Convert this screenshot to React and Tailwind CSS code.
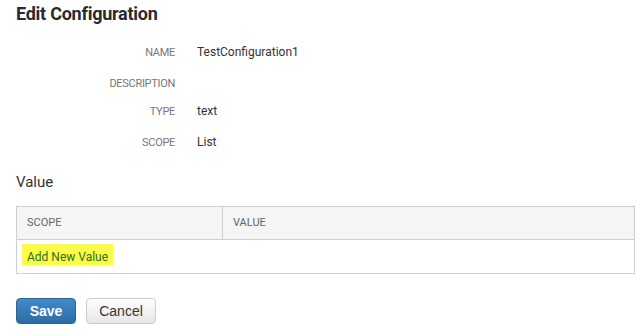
export default function App() {
  const rows = [
    { label: "NAME", value: "TestConfiguration1", h: "h-[31px]" },
    { label: "DESCRIPTION", value: "", h: "h-[28px]" },
    { label: "TYPE", value: "text", h: "h-[31px]" },
    { label: "SCOPE", value: "List", h: "h-[16px]" },
  ];
  return (
    <div className="w-[641px] h-[336px] bg-white px-4 font-['Roboto','Liberation_Sans',sans-serif] text-[#333]">
      <h1 className="pt-[2px] h-[26px] text-[18px] leading-[24px] font-bold tracking-[-0.25px] text-[#2a2a2e]">
        Edit Configuration
      </h1>
      <div className="mt-[18px] flex flex-col">
        {rows.map((r) => (
          <div key={r.label} className={`flex items-start ${r.h}`}>
            <div className="w-[159px] text-right text-[11px] leading-[16px] pt-[1px] tracking-[-0.3px] text-[#777]">
              {r.label}
            </div>
            <div className="ml-[22px] text-[12px] leading-[16px] text-[#333]">{r.value}</div>
          </div>
        ))}
      </div>
      <div className="mt-[22px] text-[15px] leading-[20px] text-[#333]">Value</div>
      <div className="mt-[14px] w-[619px] border border-[#cfcfcf]">
        <div className="flex h-[33px] bg-[#f5f5f5] border-b border-[#cfcfcf]">
          <div className="w-[206px] border-r border-[#cfcfcf] flex items-center pl-[10px] text-[11px] text-[#666]">
            SCOPE
          </div>
          <div className="flex-1 flex items-center pl-[10px] text-[11px] text-[#666]">VALUE</div>
        </div>
        <div className="h-[33px] pt-[4px] pl-[5px]">
          <span className="inline-block h-[21px] pt-[5px] px-[5px] bg-[#fbfb4a] text-[12px] leading-[16px] text-[#2c7020]">
            Add New Value
          </span>
        </div>
      </div>
      <div className="mt-[24px] flex gap-[10px]">
        <button className="w-[60px] h-[26px] rounded-[4px] border border-[#2b669a] bg-gradient-to-b from-[#428bca] to-[#2d6ca2] text-white font-bold text-[14px] font-['Liberation_Sans',sans-serif]">
          Save
        </button>
        <button className="w-[70px] h-[26px] rounded-[4px] border border-[#ccc] bg-gradient-to-b from-white to-[#e6e6e6] text-[#333] text-[14px] font-['Liberation_Sans',sans-serif]">
          Cancel
        </button>
      </div>
    </div>
  );
}
